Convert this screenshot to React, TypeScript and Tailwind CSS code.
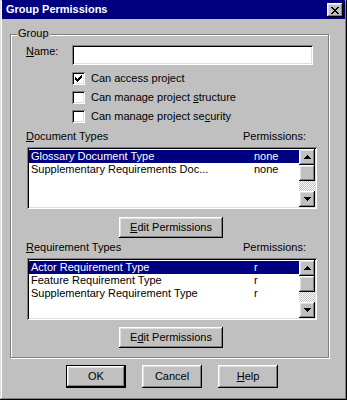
const raised =
  'bg-[#c0c0c0] shadow-[inset_-1px_-1px_#000,inset_1px_1px_#fff,inset_-2px_-2px_#808080,inset_2px_2px_#dfdfdf]';
const sunken =
  'shadow-[inset_1px_1px_#808080,inset_-1px_-1px_#fff,inset_2px_2px_#000,inset_-2px_-2px_#dfdfdf]';

type Item = { name: string; perm: string };

const docTypes: Item[] = [
  { name: 'Glossary Document Type', perm: 'none' },
  { name: 'Supplementary Requirements Doc...', perm: 'none' },
];

const reqTypes: Item[] = [
  { name: 'Actor Requirement Type', perm: 'r' },
  { name: 'Feature Requirement Type', perm: 'r' },
  { name: 'Supplementary Requirement Type', perm: 'r' },
];

function Arrow({ down }: { down?: boolean }) {
  return (
    <svg width="7" height="4" viewBox="0 0 7 4" shapeRendering="crispEdges" className={down ? 'rotate-180' : ''}>
      <path d="M3 0h1v1H3zM2 1h3v1H2zM1 2h5v1H1zM0 3h7v1H0z" fill="#000" />
    </svg>
  );
}

function Checkbox({ checked, children }: { checked?: boolean; children: React.ReactNode }) {
  return (
    <div className="h-[19px] flex items-center ml-[46px]">
      <div className={`w-[13px] h-[13px] bg-white ${sunken} flex items-center justify-center`}>
        {checked && (
          <svg width="7" height="7" viewBox="0 0 7 7" shapeRendering="crispEdges">
            <path
              d="M6 0h1v1H6zM5 1h2v1H5zM0 2h1v1H0zM4 2h3v1H4zM0 3h2v1H0zM3 3h3v1H3zM0 4h5v1H0zM1 5h3v1H1zM2 6h1v1H2z"
              fill="#000"
            />
          </svg>
        )}
      </div>
      <span className="ml-[6px] leading-[13px] whitespace-nowrap">{children}</span>
    </div>
  );
}

function ListBox({ items }: { items: Item[] }) {
  return (
    <div className={`ml-[1px] w-[290px] h-[62px] p-[2px] bg-white ${sunken} flex`}>
      <div className="flex-1 pt-[1px]">
        {items.map((item, i) => (
          <div
            key={item.name}
            className={`flex h-[13px] leading-[13px] whitespace-nowrap ${i === 0 ? 'bg-[#000080] text-white' : ''}`}
          >
            <span className="w-[225px] pl-[2px]">{item.name}</span>
            <span>{item.perm}</span>
          </div>
        ))}
      </div>
      <div className="w-[16px] flex flex-col">
        <div className={`h-[16px] ${raised} flex items-center justify-center`}>
          <Arrow />
        </div>
        <div className={`h-[16px] ${raised}`} />
        <div className="flex-1 bg-[image:conic-gradient(#c0c0c0_0_25%,#fff_0_50%,#c0c0c0_0_75%,#fff_0)] bg-[length:2px_2px]" />
        <div className={`h-[16px] ${raised} flex items-center justify-center`}>
          <Arrow down />
        </div>
      </div>
    </div>
  );
}

export default function App() {
  return (
    <div className="w-[347px] h-[400px] bg-[#c0c0c0] flex flex-col px-[2px] pb-[2px] shadow-[inset_-1px_-1px_#000,inset_1px_1px_#dfdfdf,inset_-2px_-2px_#808080,inset_2px_2px_#fff] text-[11px] text-black font-['Liberation_Sans',Arial,sans-serif]">
      {/* title bar */}
      <div className="h-[19px] bg-[#000080] flex items-start justify-between pl-[4px] pr-[2px]">
        <span className="pt-[2px] text-white font-bold leading-[15px]">Group Permissions</span>
        <div className={`mt-[3px] w-[16px] h-[14px] ${raised} flex items-center justify-center`}>
          <svg width="8" height="7" viewBox="0 0 8 7" shapeRendering="crispEdges">
            <path
              d="M0 0h2v1H0zM6 0h2v1H6zM1 1h2v1H1zM5 1h2v1H5zM2 2h4v1H2zM3 3h2v1H3zM2 4h4v1H2zM1 5h2v1H1zM5 5h2v1H5zM0 6h2v1H0zM6 6h2v1H6z"
              fill="#000"
            />
          </svg>
        </div>
      </div>

      {/* group box */}
      <div className="relative mt-[15px] ml-[8px] w-[319px] border border-[#808080] shadow-[inset_1px_1px_#fff,1px_1px_#fff] pt-[10px] pl-[15px] pb-[9px] flex flex-col">
        <span className="absolute left-[6px] top-[-8px] px-[1px] bg-[#c0c0c0] leading-[13px]">Group</span>

        <div className="flex items-start">
          <span className="w-[46px] leading-[13px]">
            <u>N</u>ame:
          </span>
          <div className={`w-[241px] h-[20px] bg-white ${sunken}`} />
        </div>

        <div className="mt-[4px] flex flex-col">
          <Checkbox checked>Can access project</Checkbox>
          <Checkbox>
            Can manage project <u>s</u>tructure
          </Checkbox>
          <Checkbox>
            Can manage project se<u>c</u>urity
          </Checkbox>
        </div>

        <div className="mt-[4px] flex leading-[13px]">
          <span className="w-[217px]">
            <u>D</u>ocument Types
          </span>
          <span>Permissions:</span>
        </div>
        <div className="mt-[4px]">
          <ListBox items={docTypes} />
        </div>
        <div className={`mt-[8px] ml-[93px] w-[104px] h-[21px] ${raised} flex items-center justify-center`}>
          <span>
            <u>E</u>dit Permissions
          </span>
        </div>

        <div className="mt-[3px] flex leading-[13px]">
          <span className="w-[217px]">
            <u>R</u>equirement Types
          </span>
          <span>Permissions:</span>
        </div>
        <div className="mt-[4px]">
          <ListBox items={reqTypes} />
        </div>
        <div className={`mt-[7px] ml-[93px] w-[104px] h-[21px] ${raised} flex items-center justify-center`}>
          <span>
            E<u>d</u>it Permissions
          </span>
        </div>
      </div>

      {/* dialog buttons */}
      <div className="mt-[7px] ml-[64px] flex gap-[16px]">
        <div className={`w-[60px] h-[23px] border border-black ${raised} flex items-center justify-center`}>OK</div>
        <div className={`w-[60px] h-[23px] ${raised} flex items-center justify-center`}>Cancel</div>
        <div className={`w-[60px] h-[23px] ${raised} flex items-center justify-center`}>
          <span>
            <u>H</u>elp
          </span>
        </div>
      </div>
    </div>
  );
}
